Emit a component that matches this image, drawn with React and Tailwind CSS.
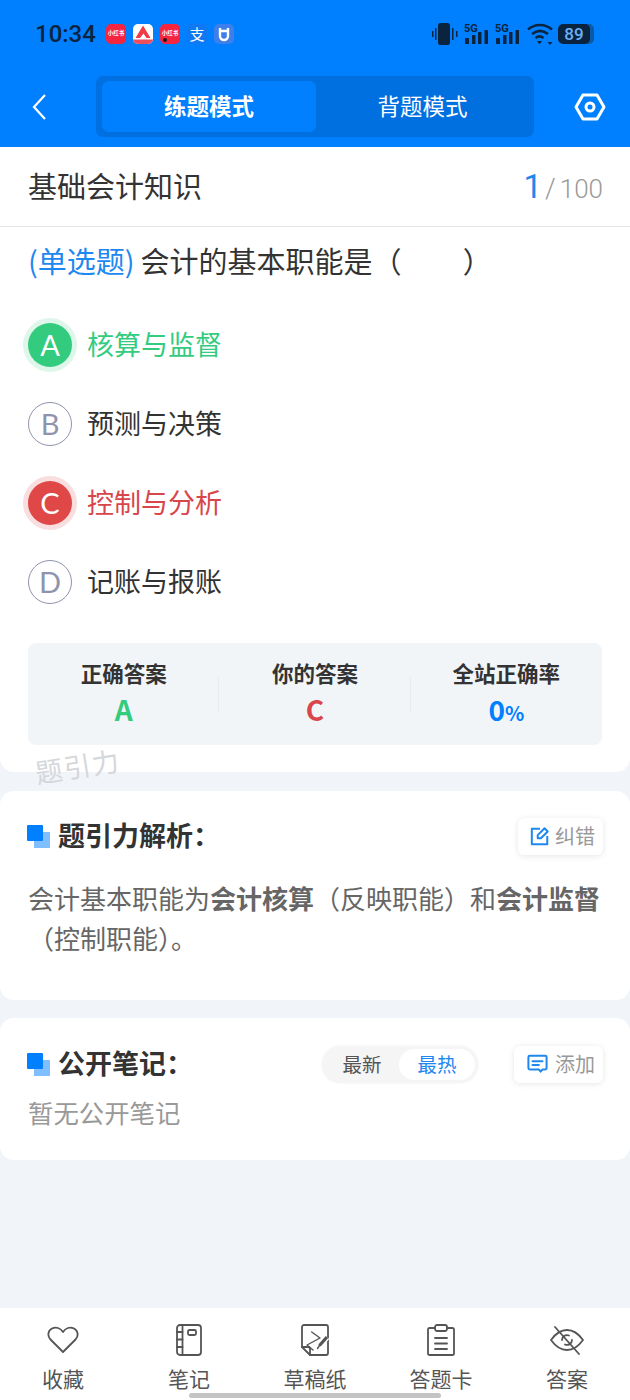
const FONT = { fontFamily: '"Noto Sans CJK SC", "Noto Sans", sans-serif' };

function StatusIcon({ bg, children }) {
  return (
    <div className={`w-5 h-5 rounded-[5px] flex items-center justify-center overflow-hidden relative ${bg}`}>{children}</div>
  );
}

function Signal() {
  return (
    <svg width="25" height="22" viewBox="0 0 25 22" fill="#0a2440" className="block">
      <text x="0" y="9" fontSize="11" fontWeight="700" fontFamily="Roboto">5G</text>
      <rect x="1" y="15" width="4" height="6" rx="0.5" /><rect x="8" y="12" width="3.500" height="9" rx="0.5" /><rect x="14" y="9" width="3.500" height="12" rx="0.5" /><rect x="20.500" y="7" width="3.500" height="14" rx="0.5" />
    </svg>
  );
}

function StatusBar() {
  return (
    <div className="h-[67px] flex items-center justify-between pl-[35px] pr-[36px] pt-[1px]">
      <div className="flex items-center">
        <span className="text-[#0a2440] text-[24px] font-medium leading-none w-[71px]" style={{ fontFamily: 'Roboto, sans-serif' }}>10:34</span>
        <div className="flex items-center gap-[7px]">
          <StatusIcon bg="bg-[#f5243f]"><span className="text-white text-[5.500px] font-bold leading-none whitespace-nowrap">小红书</span></StatusIcon>
          <StatusIcon bg="bg-white">
            <svg width="20" height="20" viewBox="0 0 20 20"><path d="M10 1.500 L17.500 14 H13.500 L10.500 9.500 L7 14 L2.500 14 Z" fill="#ee3d44" /><rect x="0" y="15.500" width="20" height="4.500" fill="#ee4d5a" /></svg>
          </StatusIcon>
          <StatusIcon bg="bg-[#f5243f]">
            <span className="text-white text-[5.500px] font-bold leading-none whitespace-nowrap">小红书</span>
            <span className="absolute left-[3px] bottom-[2px] w-[4px] h-[4px] rounded-full bg-[#1a1a1a]" />
          </StatusIcon>
          <StatusIcon bg="bg-[#0f78f2]"><span className="text-white text-[15px] leading-[20px]">支</span></StatusIcon>
          <StatusIcon bg="bg-[#3f7fec]">
            <svg width="20" height="20" viewBox="0 0 20 20" fill="none" stroke="white" strokeWidth="2.400"><path d="M6 4v8a4 4 0 0 0 8 0V4M5 7h10" /></svg>
          </StatusIcon>
        </div>
      </div>
      <div className="flex items-center gap-[6px]">
        <svg width="26" height="22" viewBox="0 0 26 22" fill="#0a2440" className="block">
          <rect x="6" y="0" width="12" height="22" rx="2.500" /><rect x="0" y="8" width="1.500" height="6" /><rect x="3" y="5" width="1.500" height="12" /><rect x="20" y="5" width="1.500" height="12" /><rect x="24" y="8" width="1.500" height="6" />
        </svg>
        <Signal />
        <Signal />
        <svg width="26" height="22" viewBox="0 0 26 22" fill="none" stroke="#0a2440" strokeWidth="2.600" className="block ml-[1px]">
          <path d="M1 6.500C8 0.500 18 0.500 25 6.500" /><path d="M5 11C10 7 16 7 21 11" /><path d="M8.500 15c2.500-2 5.500-2 8 0" />
          <path d="M10 18h5l-2.500 3.500z" fill="#0a2440" stroke="none" /><path d="M20.500 19h5L23 22z" fill="#0a2440" stroke="none" />
        </svg>
        <div className="flex items-center w-[36px] h-[20px] rounded-[5px] bg-[#0a5aa8] overflow-hidden -ml-[1px]">
          <div className="w-[32px] h-[20px] rounded-[5px] bg-[#0a2440] flex items-center justify-center text-[#6cb0f5] text-[17px] leading-none font-medium" style={{ fontFamily: 'Roboto, sans-serif' }}>89</div>
        </div>
      </div>
    </div>
  );
}

function NavBar() {
  return (
    <div className="h-[80px] flex items-start px-[28px] pt-[9px] relative">
      <div className="w-[68px] h-[61px] flex items-center">
        <svg width="17" height="28" viewBox="0 0 17 28" fill="none" stroke="white" strokeWidth="2.200" className="ml-[2px]"><path d="M15 2 L4 14 L15 26" /></svg>
      </div>
      <div className="w-[438px] h-[61px] rounded-[7px] bg-[#0070e0] py-[5px] pl-[6px] pr-[5px] flex">
        <div className="w-[214px] h-[51px] rounded-[7px] bg-[#0080ff] flex items-center justify-center text-white text-[22.500px] font-bold pb-[2px]">练题模式</div>
        <div className="flex-1 flex items-center justify-center text-white text-[22.500px] pb-[2px]">背题模式</div>
      </div>
      <div className="flex-1 h-[61px] flex items-center justify-end">
        <svg width="32" height="28" viewBox="0 0 32 28" fill="none" stroke="white" strokeWidth="3" className="mr-[-4px]">
          <path d="M9 2 H23 L30 14 L23 26 H9 L2 14 Z" strokeLinejoin="round" /><circle cx="16" cy="14" r="4" />
        </svg>
      </div>
    </div>
  );
}

function Option({ letter, text, state }) {
  const base = 'w-[44px] h-[44px] rounded-full flex items-center justify-center text-[29px] font-normal leading-none shrink-0';
  const circle =
    state === 'right'
      ? 'bg-[#33cc7f] text-white ring-[5px] ring-[#dff6ea]'
      : state === 'wrong'
      ? 'bg-[#e04848] text-white ring-[5px] ring-[#f8dede]'
      : 'border border-[#8f93ad] text-[#8f93ad]';
  const color = state === 'right' ? 'text-[#33cc7f]' : state === 'wrong' ? 'text-[#d8454a]' : 'text-[#333333]';
  return (
    <div className="h-[79px] flex items-center gap-[15px]">
      <div className={`${base} ${circle}`} style={{ fontFamily: 'Lato, sans-serif' }}>{letter}</div>
      <span className={`text-[27px] ${color}`}>{text}</span>
    </div>
  );
}

function Stat({ label, children, divider }) {
  return (
    <div className="flex-1 relative flex flex-col items-center pt-[16px]">
      <div className="text-[21.500px] leading-[28px] font-bold text-[#333333]">{label}</div>
      <div className="leading-[36px] h-[36px] mt-[4px] font-bold">{children}</div>
      {divider && <div className="absolute right-0 top-[34px] h-[36px] w-px bg-[#e9ecf0]" />}
    </div>
  );
}

function SectionTitle({ text }) {
  return (
    <div className="flex items-center gap-[8px] -ml-[1px]">
      <div className="relative w-[23px] h-[23px] shrink-0">
        <div className="absolute right-0 bottom-0 w-[16px] h-[16px] bg-[#80bfff]" />
        <div className="absolute left-0 top-0 w-[16px] h-[16px] bg-[#0080ff] rounded-[1px]" />
      </div>
      <span className="text-[27px] font-bold text-[#333333] leading-[36px] pb-[2px]">{text}</span>
    </div>
  );
}

function ChipButton({ icon, text, className }) {
  return (
    <div className={`h-[37px] pr-[8px] rounded-[6px] bg-white shadow-[0_1px_6px_rgba(0,0,0,0.1)] flex items-center -mr-[1px] ${className}`}>
      {icon}
      <span className="text-[20px] text-[#999999] leading-none">{text}</span>
    </div>
  );
}

function TabItem({ icon, label }) {
  return (
    <div className="flex-1 flex flex-col items-center">
      <div className="h-[36px] flex items-center justify-center">{icon}</div>
      <span className="text-[21px] leading-[28px] text-[#555555] mt-[6px]">{label}</span>
    </div>
  );
}

const stroke = { fill: 'none', stroke: '#555555', strokeWidth: 1.800, strokeLinejoin: 'round', strokeLinecap: 'round' };

export default function App() {
  return (
    <div className="w-[630px] h-[1400px] bg-[#f1f4f8] relative overflow-hidden flex flex-col" style={FONT}>
      <div className="bg-[#0080ff] h-[147px] shrink-0">
        <StatusBar />
        <NavBar />
      </div>

      <div className="bg-white rounded-b-[14px] h-[625px] shrink-0 relative">
        <div className="h-[80px] border-b border-[#e2e4e8] pl-[28px] pr-[27px] flex items-center justify-between">
          <span className="text-[29px] text-[#333333] pb-[2px]">基础会计知识</span>
          <div className="flex items-baseline leading-none" style={{ fontFamily: 'Roboto, sans-serif' }}>
            <span className="text-[33px] font-normal text-[#1e88f0]">1</span>
            <span className="text-[27px] font-light text-[#999999] ml-[3px] mr-[4px]">/</span>
            <span className="text-[26px] font-light text-[#999999]">100</span>
          </div>
        </div>
        <div className="px-[28px] h-[39px] flex items-center mt-[14px] text-[29px] leading-[39px] text-[#333333]">
          <span className="text-[#1e88f0]">(单选题)</span>
          <span className="ml-[6px] whitespace-pre">会计的基本职能是（<span className="inline-block w-[61px]" />）</span>
        </div>
        <div className="px-[28px] mt-[25px]">
          <Option letter="A" text="核算与监督" state="right" />
          <Option letter="B" text="预测与决策" />
          <Option letter="C" text="控制与分析" state="wrong" />
          <Option letter="D" text="记账与报账" />
        </div>
        <div className="mx-[28px] mt-[22px] h-[102px] rounded-[8px] bg-[#f2f5f8] flex">
          <Stat label="正确答案" divider><span className="text-[28px] text-[#33cc7f]">A</span></Stat>
          <Stat label="你的答案" divider><span className="text-[28px] text-[#d8454a]">C</span></Stat>
          <Stat label="全站正确率">
            <span className="text-[28px] text-[#0080ff]">0</span><span className="text-[20px] text-[#0080ff]">%</span>
          </Stat>
        </div>
        <div className="absolute left-[35px] top-[605px] text-[27px] tracking-[1.500px] leading-none text-[#d5d7da] -rotate-[9deg] z-10">题引力</div>
      </div>

      <div className="bg-white rounded-[14px] mt-[19px] h-[209px] shrink-0 px-[28px] pt-[27px]">
        <div className="flex items-center justify-between h-[36px]">
          <SectionTitle text="题引力解析：" />
          <ChipButton
            text="纠错"
            className="pl-[12px] gap-[5px]"
            icon={
              <svg width="20" height="20" viewBox="0 0 22 22" fill="none" stroke="#1e88f0" strokeWidth="2.200" strokeLinejoin="round">
                <path d="M11 3H2v17h17v-9" /><path d="M8.500 10 16 2.500 19.500 6 12 13.500H8.500z" />
              </svg>
            }
          />
        </div>
        <div className="mt-[24px] text-[26px] leading-[40px] text-[#666666] whitespace-nowrap">
          会计基本职能为<b className="font-bold">会计核算</b>（反映职能）和<b className="font-bold">会计监督</b>
          <br />
          （控制职能）。
        </div>
      </div>

      <div className="bg-white rounded-[14px] mt-[18px] h-[142px] shrink-0 px-[28px] pt-[28px]">
        <div className="flex items-center h-[36px]">
          <SectionTitle text="公开笔记：" />
          <div className="ml-auto h-[37px] w-[156px] rounded-full bg-[#f5f5f5] p-[3px] flex items-center shadow-[0_0_3px_rgba(0,0,0,0.06)] text-[19.500px] leading-none">
            <div className="flex-1 text-center text-[#555555]">最新</div>
            <div className="w-[76px] h-[31px] rounded-full bg-white flex items-center justify-center text-[#1e88f0]">最热</div>
          </div>
          <div className="ml-[36px]">
            <ChipButton
              text="添加"
              className="pl-[13px] gap-[7px]"
              icon={
                <svg width="21" height="20" viewBox="0 0 23 22" fill="none" stroke="#1e88f0" strokeWidth="2.200" strokeLinejoin="round" strokeLinecap="round">
                  <path d="M3 2h17a1.500 1.500 0 0 1 1.500 1.500v12a1.500 1.500 0 0 1-1.500 1.500h-3l-2 2.500-2-2.500H3a1.500 1.500 0 0 1-1.500-1.500v-12A1.500 1.500 0 0 1 3 2z" /><path d="M6 8h11M6 12h7" />
                </svg>
              }
            />
          </div>
        </div>
        <div className="mt-[12px] text-[25.400px] leading-[36px] text-[#999999]">暂无公开笔记</div>
      </div>

      <div className="absolute left-0 right-0 bottom-0 h-[92px] bg-white flex px-0 pt-[14px]">
        <TabItem
          label="收藏"
          icon={
            <svg width="32" height="30" viewBox="0 0 32 30" {...stroke}>
              <path d="M16 27 3.500 14.500C0 11 1 5.500 5 3.500 9 1.500 13.500 3 16 7c2.500-4 7-5.500 11-3.500 4 2 5 7.500 1.500 11z" />
            </svg>
          }
        />
        <TabItem
          label="笔记"
          icon={
            <svg width="26" height="32" viewBox="0 0 26 32" {...stroke}>
              <rect x="1" y="1" width="24" height="30" rx="3" /><path d="M6.500 1v30" /><path d="M1 8h5.500M1 15.500h5.500M1 23h5.500" /><rect x="12" y="6" width="8" height="5" rx="1.500" />
            </svg>
          }
        />
        <TabItem
          label="草稿纸"
          icon={
            <svg width="30" height="32" viewBox="0 0 30 32" {...stroke}>
              <path d="M4 1h22a2 2 0 0 1 2 2v26a2 2 0 0 1-2 2H10l-8-8V3a2 2 0 0 1 2-2z" /><path d="M2 23h6a2 2 0 0 1 2 2v6" />
              <path d="M11.700 8 20 14 7 21l6 5" strokeWidth="1.400" />
              <path d="M27 13 18 23" stroke="white" strokeWidth="6" strokeLinecap="butt" />
              <path d="M27 13 19.500 21.500" strokeWidth="3.200" strokeLinecap="butt" /><path d="M19.500 21.500 17.500 24.500" strokeWidth="1.400" />
            </svg>
          }
        />
        <TabItem
          label="答题卡"
          icon={
            <svg width="28" height="32" viewBox="0 0 28 32" {...stroke}>
              <path d="M8 4H2.500A1.500 1.500 0 0 0 1 5.500v24A1.500 1.500 0 0 0 2.500 31h23a1.500 1.500 0 0 0 1.500-1.500v-24A1.500 1.500 0 0 0 25.500 4H20" /><rect x="8" y="1" width="12" height="6" rx="2" /><path d="M8 14h12M8 19.500h12M8 25h12" />
            </svg>
          }
        />
        <TabItem
          label="答案"
          icon={
            <svg width="34" height="30" viewBox="0 0 34 30" {...stroke}>
              <path d="M1 15C6 8 11 5 17 5s11 3 16 10c-5 7-10 10-16 10S6 22 1 15z" /><path d="M12 15a5 5 0 0 1 7-4.500M22 15a5 5 0 0 1-7 4.500" /><path d="M5 2l24 27" />
            </svg>
          }
        />
      </div>
      <div className="absolute left-[189px] top-[1393px] w-[252px] h-[5px] rounded-full bg-[#c4c4c4]" />
    </div>
  );
}
